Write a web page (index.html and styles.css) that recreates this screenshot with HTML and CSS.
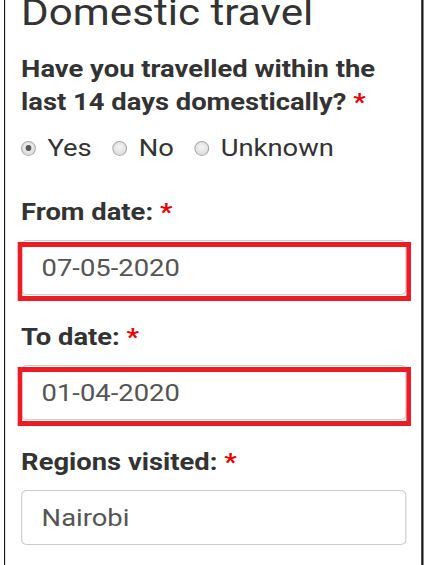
FILE: index.html
```html
<!DOCTYPE html>
<html lang="en">
<head>
  <meta charset="UTF-8" />
  <meta name="viewport" content="width=device-width, initial-scale=1.0" />
  <title>Travel history</title>
  <link rel="stylesheet" href="styles.css">
</head>
<body>
  <div class="panel">
    <h1>Domestic travel</h1>

    <!-- Question -->
    <div class="question">
      <p class="question-text">Have you travelled within the last 14 days domestically? <span class="req">*</span></p>
      <div class="choices">
        <label class="choice"><input type="radio" name="domestic" value="yes" checked /> Yes</label>
        <label class="choice"><input type="radio" name="domestic" value="no" /> No</label>
        <label class="choice"><input type="radio" name="domestic" value="unknown" /> Unknown</label>
      </div>
    </div>

    <div class="form-group">
      <label class="field-label" for="from">From date: <span class="req">*</span></label>
      <div class="flagged">
        <input class="form-control" type="text" id="from" value="07-05-2020" />
      </div>
    </div>

    <div class="form-group">
      <label class="field-label" for="to">To date: <span class="req">*</span></label>
      <div class="flagged">
        <input class="form-control" type="text" id="to" value="01-04-2020" />
      </div>
    </div>

    <div class="form-group">
      <label class="field-label" for="regions">Regions visited: <span class="req">*</span></label>
      <input class="form-control" type="text" id="regions" value="Nairobi" />
    </div>
  </div>
</body>
</html>
```

FILE: styles.css
```css
body { margin: 0; background: #fff; font-family: Roboto, "Noto Sans", sans-serif; color: #333; overflow: hidden; }
.panel { margin-left: 4px; width: 368.4px; min-height: 565px; box-sizing: border-box; border-left: 1px solid #1a1a1a; border-right: 2px solid #1a1a1a; padding: 0 13.8px 0 14px; overflow: hidden; transform: scaleX(1.14); transform-origin: 0 0; }
h1 { font-size: 37px; font-weight: 400; line-height: 40px; margin: -7px 0 0 0; color: #333; }
.question { margin-top: 20px; }
.question-text { font-size: 24px; font-weight: 700; line-height: 33px; margin: 0; }
.req { color: #e00; }
.choices { display: flex; gap: 17px; margin-top: 12px; font-size: 24px; line-height: 34px; }
.choice { display: flex; align-items: center; gap: 10px; }
.choice + .choice { margin-left: 1px; }
.choice input { appearance: none; -webkit-appearance: none; margin: 0; width: 13.2px; height: 15px; border-radius: 50%; border: 1px solid #a8a8a8; background: radial-gradient(circle at 50% 40%, #f4f4f4, #d6d6d6); box-sizing: border-box; position: relative; }
.choice input:checked::after { content: ""; position: absolute; left: 3.1px; top: 3.5px; width: 5.2px; height: 6px; border-radius: 50%; background: #555; }
.form-group { margin-top: 30px; }
.form-group + .form-group { margin-top: 25px; }
.field-label { display: block; font-size: 24px; font-weight: 700; line-height: 34px; margin-bottom: 11px; }
.form-control { display: block; width: 100%; height: 55px; box-sizing: border-box; padding: 0 17px; border: 1px solid #ccc; border-radius: 5px; font-family: Roboto, "Noto Sans", sans-serif; font-size: 24px; color: #555; background: #fff; }
.form-group:last-child .form-control { margin-top: 1px; }
.flagged { position: relative; }
.flagged::after { content: ""; position: absolute; left: -3.5px; right: -4.4px; top: 2px; bottom: -6px; border: 5px solid #ed1c24; border-left-width: 4.8px; border-right-width: 4.8px; pointer-events: none; }
```
